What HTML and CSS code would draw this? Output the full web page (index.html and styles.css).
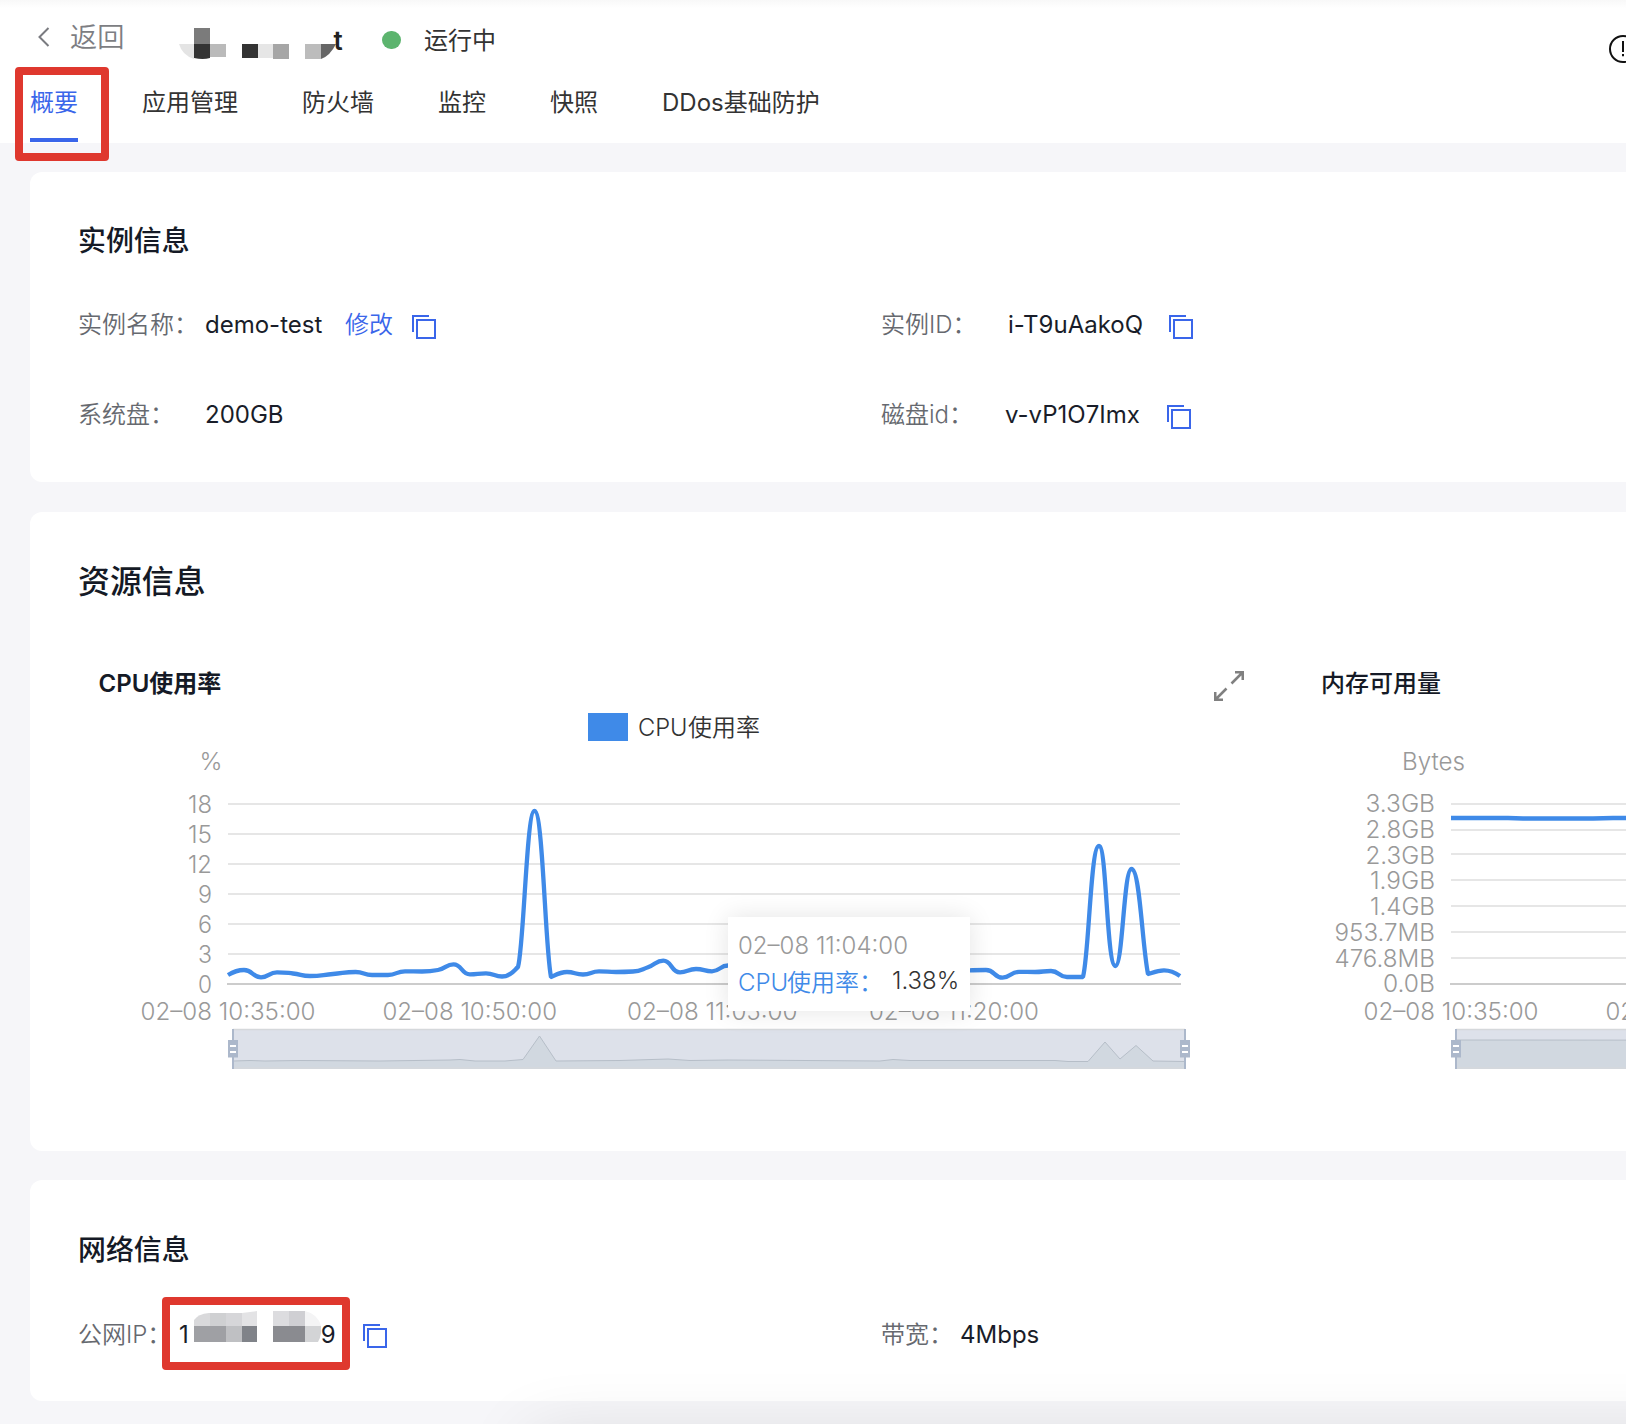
FILE: index.html
```html
<!DOCTYPE html>
<html lang="zh-CN">
<head>
<meta charset="utf-8">
<title>实例概要</title>
<link rel="stylesheet" href="styles.css">
</head>
<body>
<svg class="defs" width="0" height="0">
  <symbol id="copy" viewBox="0 0 24 24"><path d="M17 1H1V17M5 5H23V23H5Z" fill="none" stroke="currentColor" stroke-width="2"/></symbol>
</svg>
<header class="header">
  <div class="topline">
    <svg class="chevron" width="12" height="20" viewBox="0 0 12 20"><path d="M10.500 1L1.500 10L10.500 19" fill="none" stroke="currentColor" stroke-width="2"/></svg>
    <span class="back">返回</span>
    <div class="masked-name">
      <svg width="158" height="32" viewBox="0 0 158 32">
        <path d="M0 16H15V31Q3 27 0 16" fill="#e4e4e4"/>
        <path d="M15 0H31V16H15Z" fill="#7b7b7b"/>
        <path d="M15 16H31V30Q24 32 15 30Z" fill="#333"/>
        <path d="M31 16H47V29H31Z" fill="#bababa"/>
        <path d="M63 16H79V30H63Z" fill="#333"/>
        <path d="M79 16H94V30H79Z" fill="#e6e6e6"/>
        <path d="M94 16H110V31H94Z" fill="#a6a6a6"/>
        <path d="M126 16H142V31H126Z" fill="#bcbcbc"/>
        <path d="M142 16H157Q151 28 142 31Z" fill="#666"/>
      </svg>
      <span class="name-tail">t</span>
    </div>
    <i class="dot"></i>
    <span class="status">运行中</span>
    <svg class="notice" width="17" height="28" viewBox="0 0 17 28"><circle cx="14" cy="14" r="13" fill="none" stroke="#111" stroke-width="2"/><path d="M14 6V17M14 19V21.200" stroke="#111" stroke-width="2"/></svg>
  </div>
  <nav class="tabs">
    <a class="tab active">概要</a><a class="tab">应用管理</a><a class="tab">防火墙</a><a class="tab">监控</a><a class="tab">快照</a><a class="tab">DDos基础防护</a>
  </nav>
  <div class="mark mark-tab"></div>
</header>
<main class="content">
  <section class="card instance">
    <h2>实例信息</h2>
    <div class="grid">
      <div class="row"><span class="label wide">实例名称：</span><span class="value name">demo-test</span><a class="link">修改</a><svg class="copy"><use href="#copy"/></svg></div>
      <div class="row"><span class="label id1">实例ID：</span><span class="value inst">i-T9uAakoQ</span><svg class="copy"><use href="#copy"/></svg></div>
      <div class="row"><span class="label wide">系统盘：</span><span class="value">200GB</span></div>
      <div class="row"><span class="label id2">磁盘id：</span><span class="value disk">v-vP1O7Imx</span><svg class="copy"><use href="#copy"/></svg></div>
    </div>
  </section>
  <section class="card resource">
    <h2 class="large">资源信息</h2>
    <div class="charts">
      <div class="panel">
        <div class="panel-head"><h3>CPU使用率</h3>
          <svg class="expand" width="30" height="30" viewBox="0 0 30 30"><path d="M17.500 12.500L29 1M21 1.200H28.800V9M12.500 17.500L1 29M1.200 21V28.800H9" fill="none" stroke="#808080" stroke-width="2.600"/></svg>
        </div>
        <svg class="chart" id="cpu" width="1223" height="380" viewBox="79 704 1223 380"></svg>
        <div class="tooltip">
          <div class="tip-time"><svg width="171" height="36"><text x="0" y="27.500" textLength="170" lengthAdjust="spacingAndGlyphs">02–08 11:04:00</text></svg></div>
          <div class="tip-row"><span class="tip-name"><b>CPU</b>使用率：</span><span class="tip-value">1.38%</span></div>
        </div>
      </div>
      <div class="panel">
        <div class="panel-head"><h3>内存可用量</h3></div>
        <svg class="chart" id="mem" width="1223" height="380" viewBox="79 704 1223 380"></svg>
      </div>
    </div>
  </section>
  <section class="card network">
    <h2>网络信息</h2>
    <div class="grid">
      <div class="row"><span class="label ip-label">公网IP：</span>
        <span class="value ip">1<svg width="127" height="31" viewBox="0 0 127 31">
          <path d="M0 15V9Q4 3 15 2H16V15Z" fill="#d9d9db"/><path d="M16 2H32V15H16Z" fill="#cfd0d2"/><path d="M32 2H48V15H32Z" fill="#d6d6d9"/><path d="M48 2L63 0V15H48Z" fill="#e3e3e5"/>
          <path d="M0 15H32V31H0Z" fill="#9fa0a4"/><path d="M32 15H48V31H32Z" fill="#bfc0c3"/><path d="M48 15H63V31H48Z" fill="#808389"/>
          <path d="M79 0H95V15H79Z" fill="#dcdcdf"/><path d="M95 0H111V15H95Z" fill="#cfcfd3"/><path d="M111 0Q124 3 127 15H111Z" fill="#f4f4f5"/>
          <path d="M79 15H111V31H79Z" fill="#8a8b90"/><path d="M111 15H127Q128 24 124 31H111Z" fill="#d3d4d6"/>
        </svg>9<i class="mark mark-ip"></i></span>
        <svg class="copy"><use href="#copy"/></svg></div>
      <div class="row"><span class="label bw">带宽：</span><span class="value">4Mbps</span></div>
    </div>
  </section>
</main>
<div class="dock"><div class="dock-shadow"></div></div>
<script src="charts.js"></script>
</body>
</html>
```
FILE: styles.css
```css
* { box-sizing: border-box; }
html { overflow: hidden; }
body {
  margin: 0;
  width: 1626px;
  height: 1424px;
  overflow: hidden;
  position: relative;
  background: #f6f6f9;
  color: #333;
  font: 24px/36px Inter, "Noto Sans CJK SC", sans-serif;
  white-space: nowrap;
}
.defs { position: absolute; }
h2, h3 { margin: 0; font-weight: 500; color: #151a26; }
.header {
  position: relative;
  height: 142.500px;
  background: linear-gradient(#f8f8f8, #fff 8px);
}
.topline { display: flex; height: 82px; padding: 20px 0 0 38px; }
.chevron { margin-top: 7px; color: #7a7b80; }
.back { margin-left: 20px; font-size: 27.200px; line-height: 35px; width: 109px; color: #7d7e83; font-weight: 350; }
.masked-name { display: flex; width: 203px; padding-top: 7.500px; }
.masked-name svg { flex: none; }
.name-tail { margin-left: -3.500px; font-size: 26px; font-weight: 600; line-height: 26px; color: #222; }
.dot { width: 18.500px; height: 18.500px; margin-top: 10.500px; border-radius: 50%; background: #5cb46e; }
.status { margin: 3px 0 0 23.500px; }
.notice { margin: 15px 0 0 auto; flex: none; }
.tabs { display: flex; gap: 64px; padding-left: 30px; }
.tab { height: 60px; line-height: 42px; }
.tab.active { color: #3a66ea; border-bottom: 4px solid #3a66ea; }
.mark { position: absolute; border: 8px solid #df382e; border-radius: 4px; }
.mark-tab { left: 15px; top: 67px; width: 93.500px; height: 94px; }
.content { display: flex; flex-direction: column; gap: 29.500px; padding: 29px 0 0 30px; }
.card { background: #fff; border-radius: 12px 0 0 12px; padding: 49px 0 0 48px; }
.card h2 { font-size: 27.900px; line-height: 40px; }
.card h2.large { font-size: 31.900px; line-height: 42px; }
.instance { height: 310.500px; }
.resource { height: 639px; }
.network { height: 221px; }
.network h2 { line-height: 42px; }
.grid { display: grid; grid-template-columns: 803px 1fr; row-gap: 54px; margin-top: 46.500px; }
.row { display: flex; align-items: center; height: 36px; }
.label { color: #66696f; font-weight: 350; }
.value { color: #191d29; }
.wide { width: 127px; }
.id1 { width: 127px; }
.id2 { width: 124px; }
.name { width: 140px; }
.link { width: 67px; color: #3a66ea; font-weight: 350; }
.inst { width: 161px; }
.disk { width: 162px; }
.copy { width: 24px; height: 24px; color: #3a66ea; flex: none; margin-top: 3px; }
.charts { display: flex; margin: 71px 0 0 1px; }
.panel { flex: none; width: 1223px; position: relative; }
.panel:last-child { width: 324px; overflow-x: clip; }
.panel-head { display: flex; height: 20px; padding-left: 19.500px; align-items: center; }
.panel-head h3 { font-size: 24px; font-weight: 600; }
.panel:last-child h3 { font-weight: 500; margin-left: -.5px; }
.expand { margin: 5px 58px 0 auto; flex: none; }
.chart { display: block; margin-top: 10px; font: 350 24px Inter, "Noto Sans CJK SC", sans-serif; }
.chart text { fill: #999; }
.chart .legend { fill: #333; }
.grid-line { stroke: #e6e6e6; stroke-width: 2; }
.axis { stroke: #ccc; stroke-width: 2; }
.series { fill: none; stroke: #3f8ae8; stroke-width: 4.300; stroke-linejoin: bevel; }
.tooltip {
  position: absolute;
  left: 649px;
  top: 243px;
  width: 242px;
  height: 94px;
  padding: 9.500px 10px;
  background: #fff;
  box-shadow: 0 0 24px rgba(0, 0, 0, .11);
}
.tip-time { height: 37px; }
.tip-time svg { display: block; font-weight: 350; fill: #999; }
.tip-row { display: flex; line-height: 40px; font-weight: 350; }
.tip-name { color: #3f8ae8; width: 154px; }
.tip-name b { font-weight: 350; display: inline-block; width: 49px; }
.tip-value { color: #333; line-height: 36px; }
.network .grid { margin-top: 45.500px; }
.ip-label { width: 101px; }
.ip { display: flex; align-items: center; position: relative; width: 184px; }
.ip svg { flex: none; margin: -17px 0 0 5px; }
.mark-ip { left: -17px; top: -20px; width: 188px; height: 73.500px; }
.bw { width: 79px; }
.dock {
  position: absolute;
  left: 400px;
  top: 1324px;
  width: 1226px;
  height: 100px;
  overflow: hidden;
}
.dock-shadow {
  margin: 112px 0 0 130px;
  width: 1400px;
  height: 200px;
  box-shadow: 0 0 70px rgba(0, 0, 0, .12);
}
```
FILE: charts.js
```javascript
const NS = 'http://www.w3.org/2000/svg';
function add(svg, tag, attrs, text) {
  const el = document.createElementNS(NS, tag);
  for (const k in attrs) el.setAttribute(k, attrs[k]);
  if (text) el.textContent = text;
  svg.appendChild(el);
}
// Text fitted to the box from left to right edge
function label(svg, text, x0, x1, base, cls) {
  add(svg, 'text', { x: x0, y: base, textLength: x1 - x0, lengthAdjust: 'spacingAndGlyphs', class: cls || '' }, text);
}
// Bezier smoothing with control points kept between neighbouring points
function smooth(pts) {
  const clamp = (v, a, b) => Math.max(Math.min(a, b), Math.min(Math.max(a, b), v));
  let d = `M${pts[0]}`, cp = pts[0];
  for (let i = 1; i < pts.length; i++) {
    const prev = pts[i - 1], p = pts[i], next = pts[i + 1];
    let before = p, after = p;
    if (next) {
      const l0 = Math.hypot(p[0] - prev[0], p[1] - prev[1]);
      const l1 = Math.hypot(next[0] - p[0], next[1] - p[1]);
      const r = l1 / (l0 + l1);
      after = [0, 1].map(k => clamp(p[k] + (next[k] - prev[k]) * 0.5 * r, p[k], next[k]));
      before = [0, 1].map(k => clamp(p[k] - (after[k] - p[k]) * l0 / l1, p[k], prev[k]));
      after = [0, 1].map(k => p[k] + (p[k] - before[k]) * l1 / l0);
      // Foot of a spike: leave the flat part steeply
      if (l0 > 60 && l1 < 60) before = [p[0] - 6, p[1] - 30];
      if (l1 > 60 && l0 < 60) {
        before = [p[0] - 4, p[1] + (prev[1] - p[1]) * 0.35];
        after = [p[0] + 6, p[1] - 22];
      }
    }
    d += `C${cp} ${before} ${p}`;
    cp = after;
  }
  return d;
}
function gridLines(svg, ys) {
  ys.forEach(y => add(svg, 'path', { d: `M228 ${y}H1180`, class: 'grid-line' }));
  add(svg, 'path', { d: 'M227 984H1181', class: 'axis' });
}
function slider(svg, line) {
  add(svg, 'path', { d: 'M233 1029H1185V1069H233Z', fill: '#dde1ea' });
  add(svg, 'path', { d: `M233 1069L${line}L1185 1069Z`, fill: '#d1d8e0' });
  add(svg, 'path', { d: `M${line}`, fill: 'none', stroke: '#b6bec8' });
  add(svg, 'path', { d: 'M233 1029.5H1185M233 1068H1185', stroke: '#d5d8db', 'stroke-width': 1.5 });
  for (const x of [233, 1185]) {
    add(svg, 'path', { d: `M${x} 1029V1069`, stroke: '#acb8cb', 'stroke-width': 2 });
    add(svg, 'path', { d: `M${x - 5} 1040h10v17.500h-10z`, fill: '#acb8cb' });
    add(svg, 'path', { d: `M${x - 3} 1046h6M${x - 3} 1052h6`, stroke: '#fff', 'stroke-width': 2 });
  }
}

const cpu = document.getElementById('cpu');
add(cpu, 'rect', { x: 588, y: 713, width: 40, height: 28, fill: '#3f8ae8' });
label(cpu, 'CPU', 638, 687.5, 736, 'legend');
label(cpu, '使用率', 688, 760, 736, 'legend');
label(cpu, '%', 199.5, 222.5, 770);
gridLines(cpu, [804, 834, 864, 894, 924, 954]);
[['18', 188], ['15', 188], ['12', 188], ['9', 198], ['6', 198], ['3', 198], ['0', 198]]
  .forEach((t, i) => label(cpu, t[0], t[1], 212, 812.6 + i * 30));
[['02–08 10:35:00', 140.5, 315.5], ['02–08 10:50:00', 382.5, 557], ['02–08 11:05:00', 627, 797.5], ['02–08 11:20:00', 869, 1039]]
  .forEach(t => label(cpu, t[0], t[1], t[2], 1020.3));
add(cpu, 'path', { class: 'series', d: smooth([
  [228, 975], [244, 970], [261, 977.3], [277, 972.3], [293, 973.5], [310, 976], [333, 974], [355.7, 972], [372, 975],
  [388, 975], [405, 971.3], [422, 971.5], [438, 970], [453.5, 964.3], [470, 974.3], [486, 973.3], [502, 976.5], [518, 967],
  [534.5, 811], [551, 977], [567, 972], [583, 974.5], [599, 971.3], [616, 972], [633, 971.5], [648, 967.3], [663.3, 960.7],
  [680, 972.3], [696, 969], [712, 971.3], [728, 965.5], [744, 968], [776, 972], [808, 970], [840, 973], [880, 970],
  [920, 973], [955, 971], [970, 970.3], [986, 970], [1002.5, 977.7], [1019, 971.8], [1035, 972], [1051, 971], [1067, 977],
  [1083, 977], [1099, 846], [1115.5, 966], [1131.5, 869], [1148, 974], [1164, 970.3], [1180, 976]
]) });
slider(cpu, '233 1061 250 1060.5 265 1061 300 1060.5 380 1061 450 1060 460 1059.5 475 1061 505 1061 523 1059.500 539.500 1036 556 1061 620 1060.500 668 1059 690 1060.500 728 1060 880 1061 893 1059.500 910 1060.500 1055 1060.500 1068 1061.500 1088 1061.500 1105 1042 1120 1059 1136 1045.500 1153 1061 1185 1061.500');

const mem = document.getElementById('mem');
label(mem, 'Bytes', 179, 242, 770);
gridLines(mem, [804, 830, 854, 880, 906, 932, 958]);
[['3.3GB', 142.5], ['2.8GB', 142.5], ['2.3GB', 142.5], ['1.9GB', 147], ['1.4GB', 147], ['953.7MB', 111.5], ['476.8MB', 111.5], ['0.0B', 160]]
  .forEach((t, i) => label(mem, t[0], t[1], 212, 812.3 + i * 25.7));
label(mem, '02–08 10:35:00', 140.5, 315.5, 1020.3);
label(mem, '02–08 10:50:00', 382.5, 557, 1020.3);
add(mem, 'path', { class: 'series', d: 'M228 818H285L300 818.500H370L390 818H1180' });
slider(mem, '233 1040 285 1040 1185 1041');
```
